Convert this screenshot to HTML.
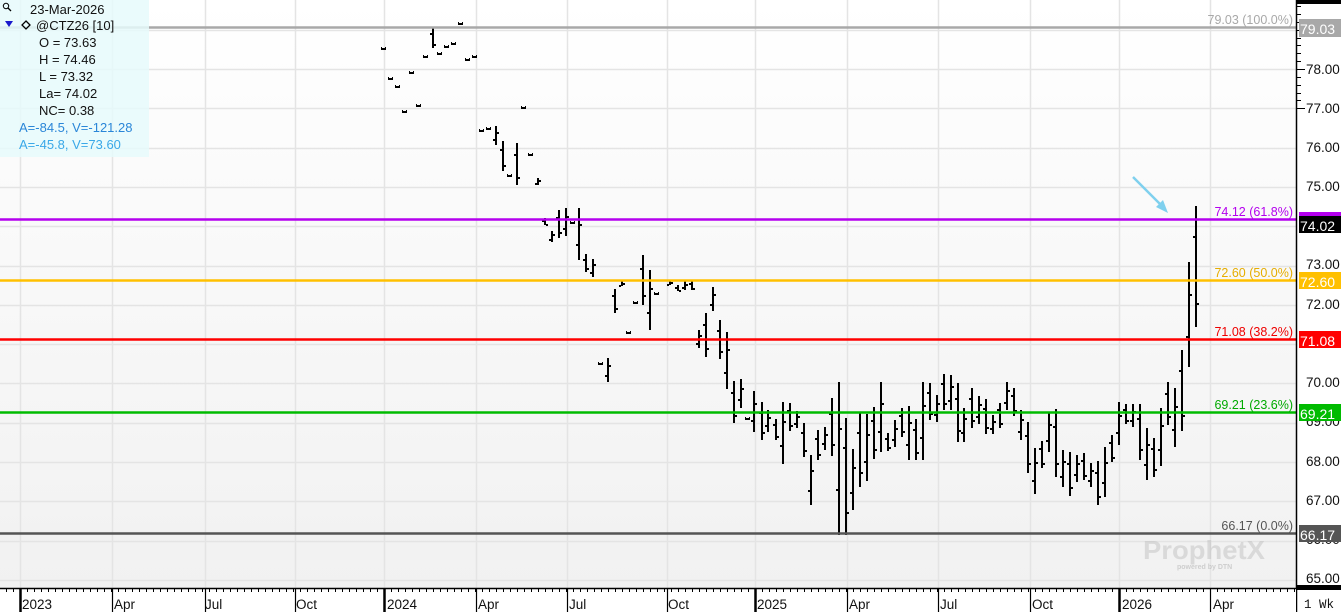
<!DOCTYPE html>
<html><head><meta charset="utf-8"><style>
html,body{margin:0;padding:0;width:1341px;height:612px;overflow:hidden;background:#fff;font-family:"Liberation Sans",sans-serif}
#c{position:absolute;left:0;top:0}
.leg{position:absolute;left:0;top:0;width:149px;height:157px;background:rgba(230,250,252,0.85);font-size:13px;color:#111}
.leg div{position:absolute;white-space:nowrap}
</style></head><body>
<svg id="c" width="1341" height="612" xmlns="http://www.w3.org/2000/svg" font-family="Liberation Sans, sans-serif">
<defs><linearGradient id="bg" x1="0" y1="0" x2="0" y2="1"><stop offset="0" stop-color="#ffffff"/><stop offset="1" stop-color="#f1f1f1"/></linearGradient></defs>
<rect x="0" y="0" width="1296" height="588" fill="url(#bg)"/>
<g id="grid" stroke="#e4e4e4" stroke-width="1.5"></g>
<g id="bars" fill="#000"></g>
<line x1="0" y1="27.5" x2="1296" y2="27.5" stroke="#a8a8a8" stroke-width="2.5"/>
<line x1="0" y1="219.5" x2="1296" y2="219.5" stroke="#b400ee" stroke-width="2.5"/>
<line x1="0" y1="280.5" x2="1296" y2="280.5" stroke="#ffc000" stroke-width="2.5"/>
<line x1="0" y1="339.5" x2="1296" y2="339.5" stroke="#ff0000" stroke-width="2.5"/>
<line x1="0" y1="412.5" x2="1296" y2="412.5" stroke="#00bb00" stroke-width="2.5"/>
<line x1="0" y1="533.5" x2="1296" y2="533.5" stroke="#555" stroke-width="2.5"/>
<g font-size="12.5" text-anchor="end">
<text x="1293" y="24" fill="#a8a8a8">79.03 (100.0%)</text>
<text x="1293" y="216" fill="#b400ee">74.12 (61.8%)</text>
<text x="1293" y="277" fill="#e6ad00">72.60 (50.0%)</text>
<text x="1293" y="336" fill="#ee0000">71.08 (38.2%)</text>
<text x="1293" y="409" fill="#00aa00">69.21 (23.6%)</text>
<text x="1293" y="530" fill="#555">66.17 (0.0%)</text>
</g>
<g opacity="0.4">
<text x="1143" y="559" font-size="26" font-weight="bold" fill="#b5b5b5" textLength="122" lengthAdjust="spacingAndGlyphs">ProphetX</text>
<text x="1177" y="569" font-size="7" font-weight="bold" fill="#999">powered by DTN</text>
</g>
<line x1="1133" y1="177" x2="1163" y2="207" stroke="#7fd0ee" stroke-width="2.5"/>
<polygon points="1168,213 1156,207 1163,200" fill="#7fd0ee"/>
<rect x="1296" y="0" width="45" height="612" fill="#fff"/>
<rect x="1296" y="0" width="45" height="4" fill="#000"/>
<line x1="1296.5" y1="0" x2="1296.5" y2="612" stroke="#000" stroke-width="1.5"/>
<g id="ticks" stroke="#000" stroke-width="1"></g>
<g font-size="13.5" fill="#111">
<text x="1306" y="74">78.00</text><text x="1306" y="113">77.00</text><text x="1306" y="152">76.00</text><text x="1306" y="191">75.00</text>
<text x="1306" y="269">73.00</text><text x="1306" y="309">72.00</text><text x="1306" y="348">71.00</text><text x="1306" y="387">70.00</text>
<text x="1306" y="426">69.00</text><text x="1306" y="466">68.00</text><text x="1306" y="505">67.00</text><text x="1306" y="544">66.00</text><text x="1306" y="583">65.00</text>
</g>
<g font-size="14" fill="#fff">
<rect x="1299" y="19" width="42" height="18" fill="#a8a8a8"/><text x="1300" y="34">79.03</text>
<rect x="1299" y="212" width="42" height="4" fill="#b400ee"/><rect x="1299" y="216" width="42" height="17" fill="#000"/><text x="1300" y="231">74.02</text>
<rect x="1299" y="272" width="42" height="17" fill="#ffc000"/><text x="1300" y="287">72.60</text>
<rect x="1299" y="331" width="42" height="17" fill="#ff0000"/><text x="1300" y="346">71.08</text>
<rect x="1299" y="404" width="42" height="17" fill="#00bb00"/><text x="1300" y="419">69.21</text>
<rect x="1299" y="525" width="42" height="17" fill="#555"/><text x="1300" y="540">66.17</text>
</g>
<rect x="1296" y="585" width="45" height="5" fill="#000"/>
<rect x="0" y="588" width="1296" height="24" fill="#fff"/>
<line x1="0" y1="588.5" x2="1296" y2="588.5" stroke="#000" stroke-width="1.5"/>
<g id="bt" stroke="#000" stroke-width="1"></g>
<g font-size="13.5" fill="#111">
<text x="22" y="609">2023</text><text x="114" y="609">Apr</text><text x="205" y="609">Jul</text><text x="296" y="609">Oct</text>
<text x="387" y="609">2024</text><text x="478" y="609">Apr</text><text x="569" y="609">Jul</text><text x="668" y="609">Oct</text>
<text x="757" y="609">2025</text><text x="849" y="609">Apr</text><text x="940" y="609">Jul</text><text x="1032" y="609">Oct</text>
<text x="1122" y="609">2026</text><text x="1213" y="609">Apr</text>
</g>
<text x="1304" y="608" font-size="12.5" font-family="Liberation Mono, monospace" fill="#111">1 Wk</text>
</svg>
<div class="leg">
<svg style="position:absolute;left:2px;top:2px" width="10" height="10"><circle cx="4" cy="4" r="2.7" fill="none" stroke="#000" stroke-width="1"/><line x1="6" y1="6" x2="9" y2="9" stroke="#000" stroke-width="1.3"/></svg>
<div style="left:30px;top:2px">23-Mar-2026</div>
<svg style="position:absolute;left:5px;top:20px" width="32" height="10"><polygon points="0,1 8,1 4,7" fill="#1a1acc"/><polygon points="21,1 25,5 21,9 17,5" fill="none" stroke="#000" stroke-width="1.3"/></svg>
<div style="left:36px;top:18px">@CTZ26 [10]</div>
<div style="left:39px;top:35px">O = 73.63</div>
<div style="left:39px;top:52px">H = 74.46</div>
<div style="left:39px;top:69px">L = 73.32</div>
<div style="left:39px;top:86px">La= 74.02</div>
<div style="left:39px;top:103px">NC= 0.38</div>
<div style="left:19px;top:120px;color:#2a86d8">A=-84.5, V=-121.28</div>
<div style="left:19px;top:137px;color:#3aa8e8">A=-45.8, V=73.60</div>
</div>
<script>
var NS="http://www.w3.org/2000/svg";
function el(p,t,a){var e=document.createElementNS(NS,t);for(var k in a)e.setAttribute(k,a[k]);p.appendChild(e);return e;}
var g=document.getElementById('grid');
var vx=[20,112,205,295,384,476,567,667,755,847,938,1030,1119,1210];
vx.forEach(function(x){el(g,'line',{x1:x+.5,y1:0,x2:x+.5,y2:588});});
for(var p=79;p>=65;p--){var y=Math.round(69+(78-p)*39.3)+.5;el(g,'line',{x1:0,y1:y,x2:1296,y2:y});}
var t=document.getElementById('ticks');
for(var i=0;i<=75;i++){var y=Math.round(69+(79-i*0.2-78)*39.3)+.5;if(y<4||y>586)continue;el(t,'line',{x1:1296,y1:y,x2:(i%5==0?1305:1301),y2:y});}
var bt=document.getElementById('bt');
var yr=[20,384,755,1119];
for(var x=6;x<1296;x+=7){el(bt,'line',{x1:x+.5,y1:588,x2:x+.5,y2:592});}
vx.forEach(function(x){var th=yr.indexOf(x)>=0;el(bt,'line',{x1:x+.5,y1:588,x2:x+.5,y2:612,'stroke-width':th?2.5:1.2});});
var d=[[383,48,48],[390,78,78],[397,86,86],[404,111,111],[411,72,72],[418,105,105],[425,56,56],[432,28,48],[439,53,53],[446,46,46],[453,43,43],[460,23,23],[467,59,59],[474,56,56],
[481,130,130],[488,128,128],[495,126,145],[502,141,171],[509,175,175],[516,143,185],[523,107,107],[530,154,154],[537,178,185],[544,218,225],[551,231,242],[558,210,238],[565,208,236],[572,222,222],[578,208,260],[585,254,272],[592,259,277],
[600,363,363],[607,358,382],[614,289,313],[621,281,286],[628,332,332],[635,302,302],[642,255,305],[649,270,330],[656,293,293],[669,281,285],[677,285,291],[684,281,290],[691,281,290],[698,330,348],[705,313,357],[712,287,311],[719,320,359],[726,332,389],[733,381,423],[740,379,408],[747,418,418],
[753,391,432],[761,402,440],[767,410,432],[775,419,440],[782,402,464],[789,403,431],[796,411,428],[803,423,457],[810,455,505],[817,430,460],[824,427,450],[831,398,456],[838,382,535],[845,418,535],[852,449,510],[859,413,487],[866,414,481],[873,407,459],[880,382,452],[887,433,451],[894,420,447],[901,408,437],[908,406,460],[915,419,460],[922,382,460],[929,383,420],
[936,395,422],[943,374,410],[950,375,410],[957,383,442],[963,408,442],[971,388,428],[978,396,424],[985,399,434],[992,415,434],[999,403,428],[1006,382,410],[1013,388,416],[1020,410,440],[1027,422,473],[1034,448,494],[1041,441,468],[1048,412,452],[1055,409,477],[1062,450,487],[1069,452,496],[1076,455,482],[1083,453,480],[1090,463,487],[1097,461,505],[1104,447,497],[1111,435,462],[1118,402,445],[1125,404,424],[1132,404,427],[1139,404,460],[1146,428,480],[1153,438,477],[1160,408,466],[1167,382,425],[1174,388,447],[1181,350,431],[1188,262,367],[1195,206,327]];
var b=document.getElementById('bars');
d.forEach(function(r,i){var x=r[0],h=r[1],l=r[2];
 if(l-h<2){el(b,'rect',{x:x-2,y:h,width:5,height:2});el(b,'rect',{x:x-2,y:h-1,width:1,height:1});el(b,'rect',{x:x+2,y:h-1,width:1,height:1});return;}
 el(b,'rect',{x:x,y:h,width:2,height:l-h});
 var o=(i%2)?h+(l-h)*0.25:h+(l-h)*0.7, c=(i%2)?h+(l-h)*0.8:h+(l-h)*0.3;
 el(b,'rect',{x:x-2,y:Math.round(o),width:2,height:2});el(b,'rect',{x:x+2,y:Math.round(c),width:2,height:2});});
</script>
</body></html>
